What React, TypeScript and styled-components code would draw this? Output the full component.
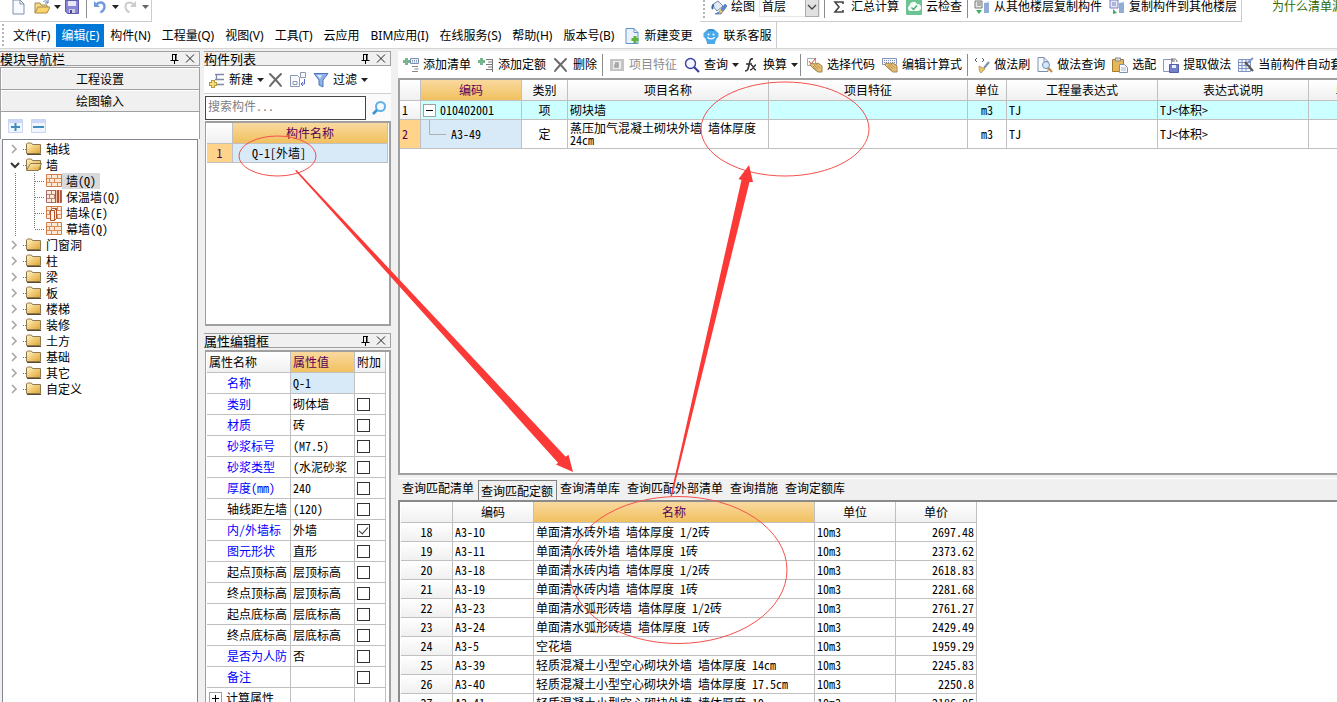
import React from "react";
import styled, { createGlobalStyle, css } from "styled-components";

const UI_FONT = '"Noto Sans", "Noto Sans CJK SC", sans-serif';
const GRID_FONT = '"Noto Sans CJK SC", sans-serif';

const Global = createGlobalStyle`
  * { box-sizing: border-box; }
  body { margin: 0; background: #f0f0f0; }
  button, input, select { font: inherit; color: inherit; margin: 0; padding: 0; }
  button { background: none; border: 0; }
  ul { list-style: none; margin: 0; padding: 0; }
  svg { display: block; flex: none; }
`;

/* ---------- shell ---------- */

const Shell = styled.div`
  position: relative;
  display: flex;
  flex-direction: column;
  height: 100vh;
  overflow: hidden;
  background: #f0f0f0;
  color: #000;
  font: 12px/16px ${GRID_FONT};
  font-feature-settings: "hwid" 1;
`;

const TopStrip = styled.header`
  display: flex;
  align-items: flex-start;
  height: 22px;
  flex: none;
  background: #fff;
  font-family: ${UI_FONT};
  font-feature-settings: normal;
  line-height: 14px;
  white-space: nowrap;
  overflow: hidden;
`;

const QuickBar = styled.div`
  display: flex;
  flex: none;
  align-items: center;
  width: 152px;
  height: 22px;
  padding: 0 0 7px 12px;
  border-right: 1px solid #ccc;
  border-bottom: 1px solid #ccc;
`;

const ModelBar = styled(QuickBar)`
  width: auto;
  margin-left: 548px;
  padding-left: 3px;
`;

const Grip = styled.span`
  width: 2px;
  height: 22px;
  margin-right: 6px;
  flex: none;
  background: repeating-linear-gradient(#b4b4b4 0 2px, transparent 2px 4px);
`;

const IconButton = styled.button<{ $after?: number }>`
  display: flex;
  align-items: center;
  margin-right: ${(p) => p.$after ?? 4}px;
`;

const ToolButton = styled.button<{ $tight?: boolean }>`
  display: flex;
  align-items: center;
  gap: 4px;
  flex: none;
  padding-right: ${(p) => (p.$tight ? 4 : 7)}px;
  white-space: nowrap;
  &:disabled { color: #8d8d8d; }
`;

const Separator = styled.span`
  flex: none;
  width: 1px;
  height: 22px;
  margin: 0 6px 0 -2px;
  background: #8c8c8c;
`;

const FloorPicker = styled.label`
  display: flex;
  align-items: center;
  width: 61px;
  height: 20px;
  margin-right: 6px;
  border: 1px solid #e6e6e6;
  select {
    appearance: none;
    width: 47px;
    padding-left: 2px;
    border: 0;
    background: #fff;
  }
  span {
    display: flex;
    align-items: center;
    width: 14px;
    height: 20px;
    border: 1px solid #adadad;
    background: #e1e1e1;
  }
`;

const HelpLink = styled.a`
  margin-left: 30px;
  color: #2f6b00;
  text-decoration: none;
`;

const MenuStrip = styled.nav`
  display: flex;
  flex: none;
  height: 27px;
  border-bottom: 1px solid #d5d5d5;
  background: #fff;
  font-family: ${UI_FONT};
  font-feature-settings: normal;
`;

const MenuInner = styled.div`
  display: flex;
  align-items: center;
  gap: 1px;
  padding-left: 2px;
  border-right: 1px solid #ccc;
  ${Grip} { margin-right: 3px; }
`;

const MenuItem = styled.button<{ $active?: boolean }>`
  display: flex;
  align-items: center;
  gap: 4px;
  height: 23px;
  padding: 2px 5px 0;
  white-space: nowrap;
  ${(p) => p.$active && css`background: #0078d7; color: #fff;`}
`;

const Workspace = styled.main`
  display: grid;
  grid-template-columns: 200px 187px minmax(0, 1fr);
  column-gap: 4px;
  flex: 1;
  min-height: 0;
  padding-top: 2px;
`;

const Column = styled.section`
  display: flex;
  flex-direction: column;
  min-width: 0;
  min-height: 0;
`;

const RightColumn = styled(Column)`
  margin-left: 3px;
`;

/* ---------- docked panels ---------- */

const TitleBar = styled.div`
  display: flex;
  align-items: center;
  flex: none;
  height: 15px;
  border: 1px solid #a0a0a0;
  border-left: 0;
  font-size: 13px;
  line-height: 13px;
  h2 { flex: 1; margin: 0; font: inherit; }
  button { margin-right: 3px; }
`;

const NavButton = styled.button`
  flex: none;
  height: 22px;
  border: 1px solid #a0a0a0;
  border-width: 1px 1px 0 1px;
  background: #f0f0f0;
  box-shadow: inset 1px 1px #fff;
  &:first-of-type { margin-top: 1px; }
`;

const TreeTools = styled.div`
  display: flex;
  align-items: center;
  gap: 7px;
  flex: none;
  height: 28px;
  padding-left: 7px;
  border: 1px solid #a0a0a0;
  border-bottom: 0;
  background: #fff;
`;

const TreeBox = styled.ul`
  flex: 1;
  margin: 0 2px;
  padding-top: 1px !important;
  border: 1px solid #828790;
  border-bottom: 0;
  background: #fff;
`;

const TreeRow = styled.button<{ $selected?: boolean }>`
  display: flex;
  align-items: center;
  height: 16px;
  span {
    height: 16px;
    padding: 0 4px;
    ${(p) => p.$selected && css`background: #d9d9d9;`}
  }
`;

const PanelTools = styled.div`
  display: flex;
  align-items: center;
  flex: none;
  height: 28px;
  padding-left: 5px;
  border-bottom: 1px solid #d0d0d0;
  background: #fff;
  font-family: ${UI_FONT};
`;

const SearchRow = styled.label`
  display: flex;
  align-items: center;
  flex: none;
  height: 27px;
  padding-left: 1px;
  background: #fafafa;
  input {
    width: 161px;
    height: 24px;
    padding: 0 2px 4px;
    border: 1px solid #444;
    background: #fff;
    outline: 0;
  }
  input::placeholder { color: #808080; opacity: 1; }
  svg { margin-left: 5px; }
`;

const ListBox = styled.div`
  flex: none;
  height: 205px;
  margin: 0 0 7px 1px;
  border: 2px solid #a0a0a0;
  border-width: 2px 2px 2px 1px;
  padding-left: 1px;
  background: #fff;
`;

const PropertyBox = styled.div`
  flex: 1;
  min-height: 0;
  margin: 2px 0 0 1px;
  border: 2px solid #a0a0a0;
  border-width: 2px 2px 0 1px;
  padding-left: 1px;
  background: #fff;
  overflow: hidden;
`;

/* ---------- grids ---------- */

const Grid = styled.table<{ $width: number }>`
  width: ${(p) => p.$width}px;
  table-layout: fixed;
  border-collapse: separate;
  border-spacing: 0;
  line-height: 14px;
`;

const cell = css`
  padding: 0 2px;
  border: 0 solid #c0c0c0;
  border-width: 0 1px 1px 0;
  overflow: hidden;
  white-space: nowrap;
`;

const Head = styled.th<{ $hot?: boolean; $left?: boolean }>`
  ${cell}
  height: 21px;
  font-weight: 400;
  text-align: ${(p) => (p.$left ? "left" : "center")};
  color: ${(p) => (p.$hot ? "#5a005a" : "#000")};
  background: ${(p) =>
    p.$hot ? "linear-gradient(#f9d99f, #f1c15f)" : "linear-gradient(#fff, #f0f0f0)"};
`;

type CellProps = {
  $h?: number;
  $align?: "left" | "center" | "right";
  $tone?: "cyan" | "blue" | "amber" | "grey";
  $link?: boolean;
  $indent?: number;
};

const tones = { cyan: "#ccffff", blue: "#d8e9f8", amber: "#ffd48a", grey: "linear-gradient(#fff, #f0f0f0)" };

const Cell = styled.td<CellProps>`
  ${cell}
  height: ${(p) => p.$h ?? 19}px;
  text-align: ${(p) => p.$align ?? "left"};
  background: ${(p) => (p.$tone ? tones[p.$tone] : "#fff")};
  color: ${(p) => (p.$link ? "#0000ff" : p.$tone === "amber" ? "#5a005a" : "#000")};
  ${(p) => p.$indent !== undefined && css`padding-left: ${p.$indent}px;`}
`;

const WrapText = styled.div`
  line-height: 12px;
  white-space: normal;
`;

const Branch = styled.div`
  display: flex;
  align-items: center;
  height: 100%;
  gap: 4px;
`;

const Check = styled.input`
  display: block;
  position: relative;
  appearance: none;
  width: 13px;
  height: 13px;
  border: 1px solid #333;
  background: #fff;
  &:checked::after {
    content: "";
    position: absolute;
    left: 3px;
    top: 0;
    width: 4px;
    height: 8px;
    border: solid #333;
    border-width: 0 1px 1px 0;
    transform: rotate(42deg);
  }
`;

const Expander = styled.button`
  display: flex;
  align-items: center;
  justify-content: center;
  width: 13px;
  height: 13px;
  border: 1px solid #a0a0a0;
  background: #fff;
`;

const GridTools = styled.div`
  display: flex;
  align-items: center;
  flex: none;
  height: 27px;
  padding-left: 5px;
  background: #fff;
  font-family: ${UI_FONT};
  overflow: hidden;
`;

const MainGrid = styled.div`
  flex: 1;
  min-height: 0;
  border: 2px solid #a0a0a0;
  border-right: 0;
  background: #fff;
  overflow: hidden;
`;

const QueryPane = styled.div`
  display: flex;
  flex-direction: column;
  flex: none;
  height: 227px;
  padding-top: 3px;
`;

const Tabs = styled.div`
  display: flex;
  flex: none;
  height: 22px;
  padding-left: 1px;
  border-top: 1px solid #fff;
`;

const Tab = styled.button<{ $active?: boolean }>`
  padding: 0 4px 3px 3px;
  white-space: nowrap;
  ${(p) =>
    p.$active &&
    css`
      margin-top: 1px;
      padding: 1px 3px 0 2px;
      border: 1px solid #808080;
      border-bottom: 0;
    `}
`;

const QueryGrid = styled.div`
  flex: 1;
  min-height: 0;
  padding-left: 1px;
  border: 2px solid #8a8a8a;
  border-width: 2px 0 0 2px;
  background: #fff;
  overflow: hidden;
`;

const Markup = styled.svg`
  position: absolute;
  left: 0;
  top: 0;
  pointer-events: none;
`;

/* ---------- icons ---------- */

type Kids = { children: React.ReactNode; w?: number };
const Ico = ({ children, w = 16 }: Kids) => (
  <svg width={w} height="16" viewBox={`0 0 ${w} 16`} fill="none" aria-hidden="true">{children}</svg>
);

const Caret = ({ dim }: { dim?: boolean }) => (
  <svg width="7" height="4" viewBox="0 0 7 4" aria-hidden="true">
    <path d="M0 0H7L3.5 4Z" fill={dim ? "#666" : "#222"} />
  </svg>
);

const Sheet = ({ x = 2, y = 1, w = 11, h = 14 }) => (
  <path d={`M${x} ${y}h${w - 4}l4 4v${h - 4}h-${w}z M${x + w - 4} ${y}v4h4`} fill="#f7faff" stroke="#7f90ab" />
);

const NewIcon = () => <Ico w={14}><Sheet x={1} /></Ico>;
const OpenIcon = () => (
  <Ico>
    <path d="M1 14V4h5l1 2h6v3" fill="#f4d98a" stroke="#a88a4a" />
    <path d="M1 14l3-6h12l-3 6z" fill="#fbd46e" stroke="#a88a4a" />
    <path d="M9 3c2-2 4-1 5 1m0-3v3h-3" stroke="#5d7fb5" />
  </Ico>
);
const SaveIcon = () => (
  <Ico w={14}>
    <path d="M.5 1.500h13v13h-11l-2-2z" fill="#8a88d6" stroke="#5d5aac" />
    <path d="M3 2h8v5H3z" fill="#e8e8fa" /><path d="M4 10h6v4H4z" fill="#d0d0ea" /><path d="M5 11h2v3H5z" fill="#4d4a9c" />
  </Ico>
);
const UndoIcon = ({ color }: { color: string }) => (
  <Ico w={14}><path d="M3 6c3-4 8-3 8.500 1 .3 3-1.500 5-4 6.500" stroke={color} strokeWidth="2.400" /><path d="M1 2v6h6z" fill={color} /></Ico>
);
const RedoIcon = () => (
  <Ico w={14}><path d="M11 6C8 2 3 3 2.500 7c-.3 3 1.500 5 4 6.500" stroke="#ccc" strokeWidth="2" /><path d="M13 2v6H7z" fill="#ccc" /></Ico>
);
const PaintIcon = () => (
  <Ico>
    <path d="M1 6l6-4 5 5-6 5z" fill="#e3ebf5" stroke="#7088ab" />
    <path d="M3 6c-2 1-2 3-1 4" stroke="#3c66a8" strokeWidth="2" />
    <path d="M14 5l-6 8-4 2 2 0 4 0 6-8z" fill="#5b86c9" stroke="#3c5f99" strokeWidth=".6" />
    <path d="M9 10l3 3-4 2z" fill="#e8c469" />
  </Ico>
);
const CloudCheck = () => (
  <Ico>
    <rect width="16" height="16" rx="1" fill="#6cc493" />
    <path d="M4 12a3 3 0 0 1-.5-5.500A4 4 0 0 1 11 5a3.500 3.500 0 0 1 1 7z" fill="#f2fbf5" />
    <path d="M5.500 8.500l2 2 3.500-4" stroke="#4aa774" strokeWidth="1.400" />
  </Ico>
);
const FloorCopy = ({ flip }: { flip?: boolean }) => (
  <Ico>
    <path d={flip ? "M1 1h8v8H1z" : "M1 2h7v7H1z"} fill="#e9e9e9" stroke={flip ? "#6f7fd0" : "#777"} />
    <path d="M3 4h4M3 6h4" stroke={flip ? "#6f7fd0" : "#777"} />
    <path d="M10 4l5-2v12h-5z" fill="#c4d9f2" /><path d="M10 5h5M10 7h5M10 9h5M10 11h5M10 13h5" stroke="#5c82b8" />
    <path d={flip ? "M4 15v-5l4 4" : "M2 11h6l-3 4z"} fill="#3fae62" />
  </Ico>
);
const ChangeIcon = () => (
  <Ico w={15}><path d="M1 .5h8l4 4v11H1z M9 .5v4h4" fill="#eaf3fd" stroke="#5f93cc" /><path d="M10 8v7M6.500 11.500h7" stroke="#5fb53a" strokeWidth="3" /></Ico>
);
const MascotIcon = () => (
  <Ico>
    <path d="M2 4c2-4 10-4 12 0l1.500 1v4L14 10c-1 2-2 3-2 6H4c0-3-1-4-2-6L.5 9V5z" fill="#4aa9e9" />
    <path d="M5 2h6" stroke="#2378b8" /><circle cx="5.500" cy="6.500" r="1" fill="#fff" /><circle cx="10.500" cy="6.500" r="1" fill="#fff" />
    <path d="M4.500 9c1 2.500 6 2.500 7 0" stroke="#fff" strokeWidth="1.200" />
  </Ico>
);
const AddList = ({ keypad }: { keypad?: boolean }) => (
  <Ico>
    <path d="M3.500 1v7M0 4.500h7" stroke="#77b58c" strokeWidth="3" />
    {keypad ? (
      <><path d="M7.500 1.500h8v5h-8z" fill="#eef3fb" stroke="#7c90b4" /><path d="M9 3.500h5M9 5h5" stroke="#7c90b4" strokeDasharray="1 1" /><path d="M9 9.500h6M11.500 12h4M9 14.500h6" stroke="#888" /></>
    ) : (
      <path d="M8 2.500h7M10 5h5M8 7.500h7M10 10h5M8 12.500h7M14.500 2v13" stroke="#777" />
    )}
  </Ico>
);
const CrossIcon = () => (
  <Ico><path d="M2 2c3 3 8 8 11 12M13 2C9 6 5 10 2 14" stroke="#6b6b6b" strokeWidth="2" strokeLinecap="round" /></Ico>
);
const FeatureIcon = () => (
  <Ico><rect x="1" y="2" width="14" height="12" fill="#c4c4c4" /><rect x="4" y="4" width="8" height="8" fill="#ececec" /><path d="M6 6h3v4H6V8h3" stroke="#999" strokeWidth="1.300" /></Ico>
);
const FindIcon = ({ color = "#3c3f9c" }) => (
  <Ico><circle cx="6.500" cy="6.500" r="5" stroke={color} strokeWidth="1.400" fill="#f2f5ff" /><path d="M10 10l5 5" stroke={color} strokeWidth="2.200" /></Ico>
);
const FxIcon = () => (
  <Ico><path d="M10 2C7 1 7 4 6 8s-1 6-4 6M3 7h6" stroke="#333" strokeWidth="1.600" /><path d="M8 8c3 0 2 5 5 5M13 8c-2 0-3 5-6 5" stroke="#333" strokeWidth="1.300" /></Ico>
);
const HandIcon = ({ keypad }: { keypad?: boolean }) => (
  <Ico>
    {keypad ? (
      <><path d="M.5 1.500h14v6H.5z" fill="#f3f6fc" stroke="#8395b8" /><path d="M2 3.500h12M2 5.500h12" stroke="#7487ad" strokeDasharray="1 1" /></>
    ) : (
      <><path d="M.5 1.500h8v7h-8z" fill="#fff" stroke="#aaa" /><path d="M2 4l2 3 5-6" stroke="#d9483b" /></>
    )}
    <path d="M4 6l4 1 3-1 4 3v6h-4L7 12 3 8z" fill="#e3bd74" stroke="#a8844a" /><path d="M7 8l4 4M9 7l4 4M6 9l4 5" stroke="#a8844a" strokeWidth=".7" />
  </Ico>
);
const BrushIcon = () => (
  <Ico><path d="M3 1L1 3l2 2M8 1l2 2-2 2" stroke="#555" /><path d="M15 5l-5 6" stroke="#7f8fa8" strokeWidth="2" /><path d="M5 9l6 3-4 4c-2-1-2-4-2-7z" fill="#e9c66f" stroke="#a98a48" strokeWidth=".7" /></Ico>
);
const MethodFind = () => (
  <Ico><Sheet x={1} y={0.5} w={10} h={14} /><circle cx="9" cy="8" r="3.500" fill="#d5e8fb" stroke="#6d8db5" /><path d="M11.500 11l3.500 4" stroke="#c8873c" strokeWidth="2" /></Ico>
);
const PasteIcon = () => (
  <Ico><path d="M.5 2.500h11v12H.5z" fill="#e6b65a" stroke="#a77b2c" /><path d="M3.500 1h5v3h-5z" fill="#ddd" stroke="#888" /><path d="M7.500 7.500h5l3 3v5h-8z" fill="#fafcff" stroke="#8090aa" /><path d="M9 11h5M9 13h5" stroke="#a9b6ca" /></Ico>
);
const ExtractIcon = () => (
  <Ico><path d="M.5 2.500h8v12h-8z" fill="#f8faff" stroke="#8a98b5" /><path d="M6.500 7.500h9v8h-9z" fill="#7180c9" stroke="#5060a8" /><path d="M9 8h4v3H9z" fill="#eef" /><path d="M9 3c2-2 5-1 5 2m-5-4v3h3" stroke="#666" /></Ico>
);
const AutoIcon = () => (
  <Ico><path d="M.5 2.500h12v12H.5zM.5 5.500h12M.5 8.500h12M.5 11.500h12M4 2.500v12M8 2.500v12" fill="#f3f6fd" stroke="#7f92c4" /><path d="M15 1L7 8" stroke="#8294c7" strokeWidth="2" /><path d="M7 5l8 9" stroke="#5d574c" strokeWidth="2" /></Ico>
);
const NewPart = () => (
  <Ico><path d="M6 2.500h9M6 7.500h9M8 12.500h7M7.500 2v6" stroke="#7b8aa5" strokeWidth="1.300" /><path d="M4 8v8M0 12h8" stroke="#b99a3c" strokeWidth="4" /><path d="M4 9v6M1 12h6" stroke="#f3de7c" strokeWidth="2" /></Ico>
);
const CopyPart = () => (
  <Ico><path d="M.5 3.500h7l2 2v9h-9zM3 9.500h4v3H3z" fill="#f7f9fd" stroke="#8c98b0" /><path d="M10.500.5h5v5h-5z" fill="#f7f9fd" stroke="#8c98b0" /><path d="M14.500 7v5h-3m1.500-2l-2 2 2 2" stroke="#5868c8" /></Ico>
);
const FilterIcon = () => (
  <Ico><path d="M1 1.500h14L10 8v7l-4-2V8z" fill="#8fb1ea" stroke="#4e74bd" /><path d="M4 3h5L7 7z" fill="#dbe8fc" /></Ico>
);
const SearchGlass = () => (
  <Ico><circle cx="9.500" cy="6.500" r="4.500" stroke="#5fb0e6" strokeWidth="2" fill="#f4fbff" /><path d="M6 10l-4 4" stroke="#3f93d0" strokeWidth="2.600" /></Ico>
);
const PinIcon = () => (
  <svg width="9" height="10" viewBox="0 0 9 10" fill="none"><path d="M2.500 0v6M2 .5h5M6 0v6M0.500 6.500h8M4.500 7v3" stroke="#000" /><path d="M5.500 0v6" stroke="#000" /></svg>
);
const CloseIcon = () => (
  <svg width="14" height="9" viewBox="0 0 14 9" fill="none"><path d="M4 .5l8 8M12 .5l-8 8" stroke="#222" /></svg>
);
const BoxSign = ({ plus }: { plus?: boolean }) => (
  <svg width="16" height="16" viewBox="0 0 16 16" fill="none">
    <path d="M.5 1.500h14v13H.5z" fill="#f1f5fe" stroke="#c8d4f4" /><path d="M1 2h13v3H1z" fill="#ccd8f8" />
    <path d={plus ? "M3 9h9M7.500 5v8" : "M2 9h11"} stroke="#3d8ec4" strokeWidth="2" />
  </svg>
);
const Folder = ({ open }: { open?: boolean }) => (
  <Ico>
    <defs>
      <linearGradient id="folderFace" x1="0" y1="0" x2="1" y2="1"><stop offset="0" stopColor="#fff6c4" /><stop offset="1" stopColor="#e2a32f" /></linearGradient>
    </defs>
    <path d="M.5 12.500V3l1-1h4l1 1.500h8v9z" fill="url(#folderFace)" stroke="#8d7a55" />
    {open && <path d="M.5 13.500l4-7h11l-3 7z" fill="url(#folderFace)" stroke="#8d7a55" />}
    <path d="M1 13.500h14" stroke={open ? "none" : "#5a4a2a"} />
  </Ico>
);
const WallIcon = ({ kind }: { kind: string }) => (
  <Ico>
    <path d="M.5 1.500h15v12H.5z" fill="#fde9d4" stroke={kind === "insul" ? "#a06b6b" : "#cf7c4c"} />
    <path d="M1 5.500h14M1 9.500h14M5.500 2v3M11.500 2v3M8.500 6v3M3.500 6v3M5.500 10v3M11.500 10v3" stroke={kind === "insul" ? "#b98080" : "#dd8a5a"} />
    {kind === "insul" && <><path d="M9 1h6v13H9z" fill="#b5543a" /><path d="M10.500 1v13M13.500 1v13" stroke="#f0c39a" /></>}
    {kind === "pier" && <path d="M4.500 5.500l2-2h4v10l-2 2h-4z M4.500 5.500h4v10M8.500 5.500l2-2" fill="#fff4ea" stroke="#b4512a" />}
  </Ico>
);

/* ---------- tree ---------- */

const FolderLead = ({ open }: { open?: boolean }) => (
  <svg width="23" height="16" viewBox="0 0 23 16" fill="none">
    {open ? <path d="M8 6l4 4 4-4" stroke="#333" strokeWidth="2" /> : <path d="M9 4l4 4-4 4" stroke="#a6a6a6" strokeWidth="1.600" />}
    <path d="M20 8.500h3" stroke="#777" strokeDasharray="1 1" />
  </svg>
);
const LeafLead = ({ last }: { last?: boolean }) => (
  <svg width="43" height="16" viewBox="0 0 43 16" fill="none">
    <path d={`M12.500 0v16M31.500 0v${last ? 8 : 16}M32 8.500h10`} stroke="#777" strokeDasharray="1 1" />
  </svg>
);

const folders = ["门窗洞", "柱", "梁", "板", "楼梯", "装修", "土方", "基础", "其它", "自定义"];
const walls = [
  { name: "墙(Q)", kind: "wall" },
  { name: "保温墙(Q)", kind: "insul" },
  { name: "墙垛(E)", kind: "pier" },
  { name: "幕墙(Q)", kind: "wall" },
];

const FolderRow = ({ name, open }: { name: string; open?: boolean }) => (
  <li><TreeRow><FolderLead open={open} /><Folder open={open} /><span>{name}</span></TreeRow></li>
);

const PanelTitle = ({ text }: { text: string }) => (
  <TitleBar>
    <h2>{text}</h2>
    <button aria-label="固定"><PinIcon /></button>
    <button aria-label="关闭"><CloseIcon /></button>
  </TitleBar>
);

/* ---------- data ---------- */

const menus = ["文件(F)", "编辑(E)", "构件(N)", "工程量(Q)", "视图(V)", "工具(T)", "云应用", "BIM应用(I)", "在线服务(S)", "帮助(H)", "版本号(B)"];

type Prop = { name: string; value: string; link?: boolean; checked?: boolean };
const props: Prop[] = [
  { name: "类别", value: "砌体墙", link: true },
  { name: "材质", value: "砖", link: true },
  { name: "砂浆标号", value: "(M7.5)", link: true },
  { name: "砂浆类型", value: "(水泥砂浆", link: true },
  { name: "厚度(mm)", value: "240", link: true },
  { name: "轴线距左墙", value: "(120)" },
  { name: "内/外墙标", value: "外墙", link: true, checked: true },
  { name: "图元形状", value: "直形", link: true },
  { name: "起点顶标高", value: "层顶标高" },
  { name: "终点顶标高", value: "层顶标高" },
  { name: "起点底标高", value: "层底标高" },
  { name: "终点底标高", value: "层底标高" },
  { name: "是否为人防", value: "否", link: true },
  { name: "备注", value: "", link: true },
];

const quotas: [number, string, string, string][] = [
  [18, "A3-10", "单面清水砖外墙 墙体厚度 1/2砖", "2697.48"],
  [19, "A3-11", "单面清水砖外墙 墙体厚度 1砖", "2373.62"],
  [20, "A3-18", "单面清水砖内墙 墙体厚度 1/2砖", "2618.83"],
  [21, "A3-19", "单面清水砖内墙 墙体厚度 1砖", "2281.68"],
  [22, "A3-23", "单面清水弧形砖墙 墙体厚度 1/2砖", "2761.27"],
  [23, "A3-24", "单面清水弧形砖墙 墙体厚度 1砖", "2429.49"],
  [24, "A3-5", "空花墙", "1959.29"],
  [25, "A3-39", "轻质混凝土小型空心砌块外墙 墙体厚度 14cm", "2245.83"],
  [26, "A3-40", "轻质混凝土小型空心砌块外墙 墙体厚度 17.5cm", "2250.8"],
  [27, "A3-41", "轻质混凝土小型空心砌块外墙 墙体厚度 19", "2186.85"],
];

const tabs = ["查询匹配清单", "查询匹配定额", "查询清单库", "查询匹配外部清单", "查询措施", "查询定额库"];

const Cols = ({ widths }: { widths: number[] }) => (
  <colgroup>{widths.map((w, i) => <col key={i} width={w} />)}</colgroup>
);

export default function App() {
  return (
    <Shell lang="zh-CN">
      <Global />
      <TopStrip>
        <QuickBar>
          <IconButton $after={8} aria-label="新建"><NewIcon /></IconButton>
          <IconButton aria-label="打开"><OpenIcon /></IconButton>
          <IconButton aria-label="打开选项"><Caret /></IconButton>
          <IconButton $after={9} aria-label="保存"><SaveIcon /></IconButton>
          <Separator />
          <IconButton $after={5} aria-label="撤销"><UndoIcon color="#6f9bdc" /></IconButton>
          <IconButton aria-label="撤销选项"><Caret /></IconButton>
          <IconButton $after={5} aria-label="恢复"><RedoIcon /></IconButton>
          <IconButton $after={0} aria-label="恢复选项"><Caret dim /></IconButton>
        </QuickBar>
        <ModelBar>
          <Grip />
          <ToolButton $tight><PaintIcon />绘图</ToolButton>
          <FloorPicker>
            <select aria-label="楼层" defaultValue="首层"><option>首层</option></select>
            <span><svg width="12" height="8" viewBox="0 0 12 8" fill="none"><path d="M2 2l4 4 4-4" stroke="#444" strokeWidth="1.300" /></svg></span>
          </FloorPicker>
          <Separator />
          <ToolButton><Ico><path d="M12 5V3H4l4 5-4 5h8v-2" stroke="#444" strokeWidth="1.600" /></Ico>汇总计算</ToolButton>
          <ToolButton><CloudCheck />云检查</ToolButton>
          <Separator />
          <ToolButton><FloorCopy />从其他楼层复制构件</ToolButton>
          <ToolButton $tight><FloorCopy flip />复制构件到其他楼层</ToolButton>
        </ModelBar>
        <HelpLink href="#help">为什么清单漏项</HelpLink>
      </TopStrip>

      <MenuStrip>
        <MenuInner>
          <Grip />
          {menus.map((m) => <MenuItem key={m} $active={m === "编辑(E)"}>{m}</MenuItem>)}
          <MenuItem><ChangeIcon />新建变更</MenuItem>
          <MenuItem><MascotIcon />联系客服</MenuItem>
        </MenuInner>
      </MenuStrip>

      <Workspace>
        <Column>
          <PanelTitle text="模块导航栏" />
          <NavButton>工程设置</NavButton>
          <NavButton>绘图输入</NavButton>
          <TreeTools>
            <button aria-label="全部展开"><BoxSign plus /></button>
            <button aria-label="全部折叠"><BoxSign /></button>
          </TreeTools>
          <TreeBox>
            <FolderRow name="轴线" />
            <FolderRow name="墙" open />
            {walls.map((w, i) => (
              <li key={w.name}>
                <TreeRow $selected={i === 0}><LeafLead last={i === 3} /><WallIcon kind={w.kind} /><span>{w.name}</span></TreeRow>
              </li>
            ))}
            {folders.map((f) => <FolderRow key={f} name={f} />)}
          </TreeBox>
        </Column>

        <Column>
          <PanelTitle text="构件列表" />
          <PanelTools>
            <ToolButton $tight><NewPart />新建<Caret /></ToolButton>
            <IconButton $after={6} aria-label="删除"><CrossIcon /></IconButton>
            <IconButton $after={7} aria-label="复制"><CopyPart /></IconButton>
            <ToolButton><FilterIcon />过滤<Caret /></ToolButton>
          </PanelTools>
          <SearchRow>
            <input type="text" placeholder="搜索构件..." aria-label="搜索构件" />
            <SearchGlass />
          </SearchRow>
          <ListBox>
            <Grid $width={181}>
              <Cols widths={[26, 155]} />
              <thead><tr><Head /><Head $hot>构件名称</Head></tr></thead>
              <tbody>
                <tr><Cell $tone="amber" $align="center">1</Cell><Cell $tone="blue" $indent={19}>Q-1[外墙]</Cell></tr>
              </tbody>
            </Grid>
          </ListBox>
          <PanelTitle text="属性编辑框" />
          <PropertyBox>
            <Grid $width={179}>
              <Cols widths={[84, 64, 31]} />
              <thead><tr><Head $left>属性名称</Head><Head $left $hot>属性值</Head><Head $left>附加</Head></tr></thead>
              <tbody>
                <tr><Cell $h={21} $link $indent={20}>名称</Cell><Cell $tone="blue">Q-1</Cell><Cell /></tr>
                {props.map((p) => (
                  <tr key={p.name}>
                    <Cell $h={21} $link={p.link} $indent={20}>{p.name}</Cell>
                    <Cell>{p.value}</Cell>
                    <Cell><Check type="checkbox" aria-label={p.name} defaultChecked={p.checked} /></Cell>
                  </tr>
                ))}
                <tr>
                  <Cell $h={21}>
                    <Branch>
                      <Expander aria-label="展开计算属性"><svg width="9" height="9"><path d="M1 4.500h7M4.500 1v7" stroke="#000" /></svg></Expander>
                      计算属性
                    </Branch>
                  </Cell>
                  <Cell /><Cell />
                </tr>
              </tbody>
            </Grid>
          </PropertyBox>
        </Column>

        <RightColumn>
          <GridTools>
            <ToolButton><AddList keypad />添加清单</ToolButton>
            <ToolButton><AddList />添加定额</ToolButton>
            <ToolButton><CrossIcon />删除</ToolButton>
            <Separator />
            <ToolButton disabled><FeatureIcon />项目特征</ToolButton>
            <ToolButton $tight><FindIcon />查询<Caret /></ToolButton>
            <ToolButton $tight><FxIcon />换算<Caret /></ToolButton>
            <Separator />
            <ToolButton><HandIcon />选择代码</ToolButton>
            <ToolButton><HandIcon keypad />编辑计算式</ToolButton>
            <Separator />
            <ToolButton><BrushIcon />做法刷</ToolButton>
            <ToolButton><MethodFind />做法查询</ToolButton>
            <ToolButton><PasteIcon />选配</ToolButton>
            <ToolButton><ExtractIcon />提取做法</ToolButton>
            <ToolButton><AutoIcon />当前构件自动套</ToolButton>
          </GridTools>
          <MainGrid>
            <Grid $width={987}>
              <Cols widths={[21, 101, 46, 201, 199, 39, 151, 151, 78]} />
              <thead>
                <tr>
                  <Head /><Head $hot>编码</Head><Head>类别</Head><Head>项目名称</Head><Head>项目特征</Head>
                  <Head>单位</Head><Head>工程量表达式</Head><Head>表达式说明</Head><Head>单价</Head>
                </tr>
              </thead>
              <tbody>
                <tr>
                  <Cell $tone="grey">1</Cell>
                  <Cell $tone="cyan">
                    <Branch>
                      <Expander aria-label="折叠"><svg width="9" height="9"><path d="M1 4.500h7" stroke="#000" /></svg></Expander>
                      010402001
                    </Branch>
                  </Cell>
                  <Cell $tone="cyan" $align="center">项</Cell>
                  <Cell $tone="cyan">砌块墙</Cell>
                  <Cell $tone="cyan" />
                  <Cell $tone="cyan" $align="center">m3</Cell>
                  <Cell $tone="cyan">TJ</Cell>
                  <Cell $tone="cyan">TJ&lt;体积&gt;</Cell>
                  <Cell $tone="cyan" />
                </tr>
                <tr>
                  <Cell $h={29} $tone="amber">2</Cell>
                  <Cell $tone="blue">
                    <Branch>
                      <svg width="24" height="28" viewBox="0 0 24 28" fill="none"><path d="M6.500 0v14.500H23" stroke="#b0b0b0" /></svg>
                      A3-49
                    </Branch>
                  </Cell>
                  <Cell $align="center">定</Cell>
                  <Cell><WrapText>蒸压加气混凝土砌块外墙 墙体厚度 24cm</WrapText></Cell>
                  <Cell />
                  <Cell $align="center">m3</Cell>
                  <Cell>TJ</Cell>
                  <Cell>TJ&lt;体积&gt;</Cell>
                  <Cell />
                </tr>
              </tbody>
            </Grid>
          </MainGrid>
          <QueryPane>
            <Tabs role="tablist">
              {tabs.map((t, i) => <Tab key={t} role="tab" aria-selected={i === 1} $active={i === 1}>{t}</Tab>)}
            </Tabs>
            <QueryGrid>
              <Grid $width={576}>
                <Cols widths={[52, 81, 281, 81, 81]} />
                <thead><tr><Head /><Head>编码</Head><Head $hot>名称</Head><Head>单位</Head><Head>单价</Head></tr></thead>
                <tbody>
                  {quotas.map(([n, code, name, price]) => (
                    <tr key={n}>
                      <Cell $tone="grey" $align="center">{n}</Cell>
                      <Cell>{code}</Cell>
                      <Cell>{name}</Cell>
                      <Cell>10m3</Cell>
                      <Cell $align="right">{price}</Cell>
                    </tr>
                  ))}
                </tbody>
              </Grid>
            </QueryGrid>
          </QueryPane>
        </RightColumn>
      </Workspace>

      <Markup width="900" height="702" viewBox="0 0 900 702" fill="none" aria-hidden="true">
        <g stroke="#f5504c">
          <ellipse cx="277.500" cy="156" rx="38.500" ry="20" />
          <ellipse cx="785" cy="129" rx="84" ry="47" />
          <ellipse cx="678" cy="570" rx="109" ry="73.500" />
        </g>
        <g fill="#fb3a38">
          <path d="M295 170.500L296.500 170L565.700 456.700L568.500 454.700L573 472L556 464.500L558 462.700Z" />
          <path d="M670.500 496L672 496L749.500 182L753 182L749 165L738.500 179L741.500 180Z" />
        </g>
      </Markup>
    </Shell>
  );
}
